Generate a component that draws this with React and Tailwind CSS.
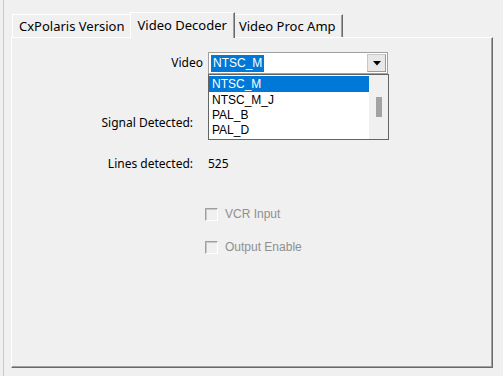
import React from "react";

function Tab({ label, selected, first }) {
  if (selected) {
    return (
      <div className="relative z-10 -mx-[2px] h-[26px] mb-[-1px] bg-[#f0f0f0] border-l border-t border-white border-r border-r-[#696969] shadow-[inset_-1px_0_0_#a0a0a0] px-[7px] flex items-center text-[13px] leading-none text-black">
        {label}
      </div>
    );
  }
  return (
    <div className={"h-[23px] bg-[#f0f0f0] border-t border-t-white border-r border-r-[#696969] shadow-[inset_-1px_0_0_#a0a0a0] px-[6px] flex items-center text-[13px] leading-none text-black " + (first ? "border-l border-l-white" : "")}>
      {label}
    </div>
  );
}

export default function App() {
  return (
    <div className="w-[503px] h-[376px] bg-[#f0f0f0] overflow-hidden flex font-['Segoe_UI','Noto_Sans',sans-serif]">
      <div className="w-[3px] shrink-0" />
      <div className="w-px shrink-0 bg-[#c8c8c8]" />
      <div className="flex-1 flex flex-col pl-[7px] pt-[12px]">
        <div className="flex items-end h-[25px] pl-[1px]">
          <Tab label="CxPolaris Version" first />
          <Tab label="Video Decoder" selected />
          <Tab label="Video Proc Amp" />
        </div>
        <div className="w-[482px] h-[331px] border-l border-t border-white border-r border-b border-r-[#696969] border-b-[#696969] shadow-[inset_-1px_-1px_0_#a0a0a0] flex flex-col text-[12px] text-black">
          {/* Video row */}
          <div className="flex items-center mt-[14px] h-[22px]">
            <div className="w-[192px] text-right pr-[1px] leading-none">Video</div>
            <div className="relative ml-[4px] w-[180px] h-[22px] bg-white border border-[#a0a0a0] flex items-center font-['Liberation_Sans',sans-serif]">
              <div className="ml-[2px] h-[17px] px-[2px] bg-[#0078d7] text-white flex items-center leading-none text-[12px]">
                NTSC_M
              </div>
              <div className="ml-auto mr-px w-[19px] h-[18px] bg-[#e8e8e8] border border-[#c8c8c8] border-r-[#9a9a9a] border-b-[#9a9a9a] flex items-center justify-center">
                <svg width="8" height="5" viewBox="0 0 8 5">
                  <path d="M0 0h8L4 4.5z" fill="#000" />
                </svg>
              </div>
              {/* dropdown list */}
              <div className="absolute left-[-1px] top-[21px] w-[181px] h-[66px] bg-white border border-[#646464] flex z-20">
                <div className="flex-1 flex flex-col pt-px text-[12px] leading-none">
                  <div className="h-[16px] bg-[#0078d7] text-white flex items-center pl-[3px]">NTSC_M</div>
                  <div className="h-[15px] flex items-center pl-[3px]">NTSC_M_J</div>
                  <div className="h-[15px] flex items-center pl-[3px]">PAL_B</div>
                  <div className="h-[15px] flex items-center pl-[3px]">PAL_D</div>
                </div>
                <div className="w-[19px] bg-[#f0f0f0] flex justify-center pt-[22px]">
                  <div className="w-[6px] h-[20px] bg-[#a3a3a3]" />
                </div>
              </div>
            </div>
          </div>
          {/* Signal detected */}
          <div className="flex items-center mt-[41px] h-[16px]">
            <div className="w-[181px] text-right leading-none">Signal Detected:</div>
          </div>
          {/* Lines detected */}
          <div className="flex items-center mt-[25px] h-[16px]">
            <div className="w-[181px] text-right leading-none">Lines detected:</div>
            <div className="ml-[15px] leading-none">525</div>
          </div>
          {/* VCR Input */}
          <div className="flex items-center mt-[35px] h-[14px] pl-[193px] font-['Liberation_Sans',sans-serif] text-[12px] text-[#8f8f8f]">
            <div className="w-[13px] h-[13px] border border-[#a0a0a0] border-r-white border-b-white bg-[#f0f0f0] shadow-[inset_1px_1px_0_#c8c8c8]" />
            <div className="ml-[7px] leading-none">VCR Input</div>
          </div>
          {/* Output Enable */}
          <div className="flex items-center mt-[19px] h-[14px] pl-[193px] font-['Liberation_Sans',sans-serif] text-[12px] text-[#8f8f8f]">
            <div className="w-[13px] h-[13px] border border-[#a0a0a0] border-r-white border-b-white bg-[#f0f0f0] shadow-[inset_1px_1px_0_#c8c8c8]" />
            <div className="ml-[7px] leading-none">Output Enable</div>
          </div>
        </div>
      </div>
    </div>
  );
}
